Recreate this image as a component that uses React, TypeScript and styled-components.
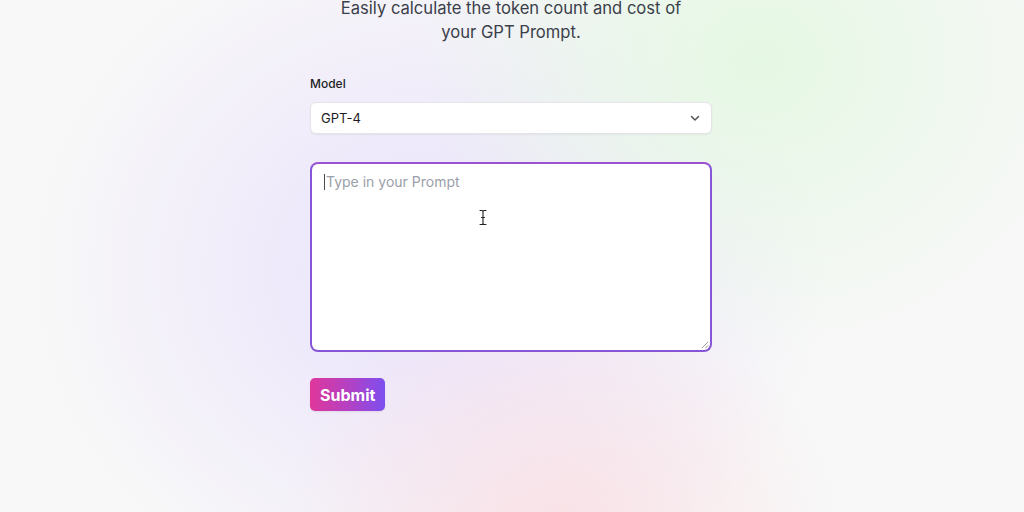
import React from "react";
import styled, { createGlobalStyle } from "styled-components";

const Global = createGlobalStyle`
  html, body { margin: 0; padding: 0; }
  body {
    font-family: Inter, "Noto Sans", "Liberation Sans", sans-serif;
    background: #f8f8f8;
    overflow: hidden;
  }
`;

const Page = styled.div`
  min-height: 512px;
  display: flex;
  justify-content: center;
  background:
    radial-gradient(ellipse 280px 240px at 560px 530px, rgba(250, 224, 228, 0.9), rgba(250, 224, 228, 0) 100%),
    radial-gradient(ellipse 340px 300px at 760px 60px, rgba(228, 248, 226, 0.95), rgba(228, 248, 226, 0) 100%),
    radial-gradient(ellipse 400px 360px at 430px 270px, rgba(233, 225, 252, 1), rgba(233, 225, 252, 0) 100%),
    #f8f8f8;
`;

const Column = styled.main`
  width: 402px;
  margin-left: -2px;
  display: flex;
  flex-direction: column;
  align-items: stretch;
`;

const Heading = styled.p`
  margin: -4px 0 0;
  text-align: center;
  font-size: 16.6px;
  line-height: 24px;
  color: #3b3f4a;
  font-weight: 400;
`;

const Label = styled.label`
  margin-top: 32px;
  font-size: 12px;
  line-height: 16px;
  font-weight: 500;
  color: #1d1d1f;
`;

const SelectBox = styled.div`
  margin-top: 10px;
  height: 30px;
  border: 1px solid #e4e4e8;
  border-radius: 6px;
  background: #ffffff;
  box-shadow: 0 1px 2px rgba(0, 0, 0, 0.05);
  display: flex;
  align-items: center;
  justify-content: space-between;
  padding: 0 10px;
  font-size: 13px;
  color: #1d1d1f;
`;

const Chevron = styled.svg`
  width: 12px;
  height: 12px;
`;

const PromptBox = styled.div`
  position: relative;
  margin-top: 28px;
  border: 2px solid #8755d8;
  border-top-color: #9a52d0;
  border-radius: 8px;
  background: #ffffff;
  padding: 8px 12px;
  height: 170px;
`;

const Placeholder = styled.div`
  display: flex;
  align-items: center;
  font-size: 14px;
  line-height: 20px;
  color: #9aa0a8;
`;

const Caret = styled.span`
  width: 1px;
  height: 16px;
  background: #4a4a4a;
  margin-right: 1px;
`;

const Pointer = styled.svg`
  position: absolute;
  left: 166px;
  top: 45px;
  width: 10px;
  height: 17px;
`;

const Grip = styled.svg`
  position: absolute;
  right: 1px;
  bottom: 1px;
  width: 8px;
  height: 8px;
`;

const Submit = styled.button`
  margin-top: 26px;
  align-self: flex-start;
  height: 33px;
  padding: 0 10px;
  border: none;
  border-radius: 5px;
  background: linear-gradient(90deg, #e0379b 0%, #b042c6 55%, #7d4ef0 100%);
  color: #ffffff;
  font-family: Inter, "Noto Sans", "Liberation Sans", sans-serif;
  font-size: 16px;
  font-weight: 700;
  box-shadow: 0 1px 2px rgba(0, 0, 0, 0.08);
`;

export default function App() {
  return (
    <>
      <Global />
      <Page>
        <Column>
          <Heading>
            Easily calculate the token count and cost of
            <br />
            your GPT Prompt.
          </Heading>
          <Label>Model</Label>
          <SelectBox>
            <span>GPT-4</span>
            <Chevron viewBox="0 0 12 12" fill="none">
              <path d="M2.5 4.5 L6 8 L9.5 4.5" stroke="#555" strokeWidth="1.5" strokeLinecap="round" strokeLinejoin="round" />
            </Chevron>
          </SelectBox>
          <PromptBox>
            <Placeholder>
              <Caret />
              Type in your Prompt
            </Placeholder>
            <Pointer viewBox="0 0 10 17" fill="none">
              <path d="M2 1.5 H4 Q5 1.5 5 3 V14 Q5 15.5 4 15.5 H2 M8 1.5 H6 Q5 1.5 5 3 M5 14 Q5 15.5 6 15.5 H8 M3.5 8.5 H6.5" stroke="#fff" strokeWidth="2.6" strokeLinecap="round" />
              <path d="M2 1.5 H4 Q5 1.5 5 3 V14 Q5 15.5 4 15.5 H2 M8 1.5 H6 Q5 1.5 5 3 M5 14 Q5 15.5 6 15.5 H8 M3.5 8.5 H6.5" stroke="#222" strokeWidth="1.1" strokeLinecap="round" />
            </Pointer>
            <Grip viewBox="0 0 8 8">
              <path d="M7 1 L1 7 M7 4.5 L4.5 7" stroke="#9a9a9a" strokeWidth="1" />
            </Grip>
          </PromptBox>
          <Submit>Submit</Submit>
        </Column>
      </Page>
    </>
  );
}
